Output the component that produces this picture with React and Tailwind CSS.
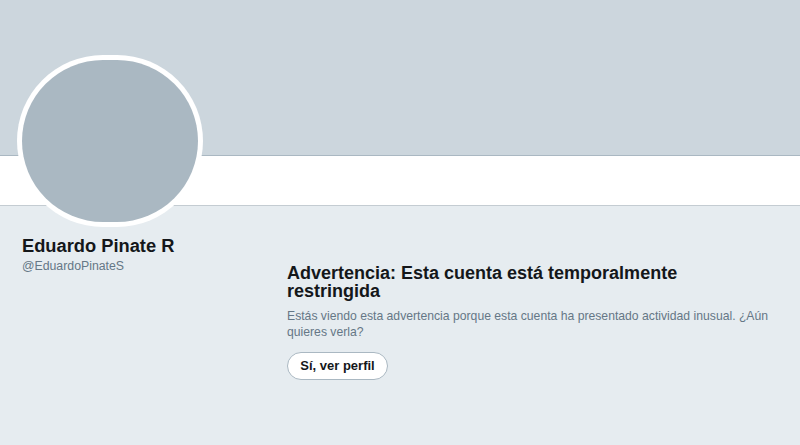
import React from "react";

const App = () => {
  return (
    <div
      className="relative w-[800px] h-[445px] overflow-hidden bg-[#e6ecf0]"
      style={{ fontFamily: '"Liberation Sans", Arial, sans-serif' }}
    >
      {/* header */}
      <div className="h-[156px] bg-[#ccd6dd] border-b border-[#aab8c2]" />
      <div className="h-[50px] bg-white border-b border-[#c4ccd2]" />

      {/* avatar */}
      <div className="absolute left-[17px] top-[55px] w-[186px] h-[172px] rounded-full bg-white p-[5px]">
        <div className="w-full h-full rounded-full bg-[#aab8c2]" />
      </div>

      <div className="flex">
        <div className="w-[287px] pl-[22px] pt-[29px]">
          <h2 className="text-[18.3px] leading-[22px] font-bold text-[#14171a]">Eduardo Pinate R</h2>
          <p className="text-[12.3px] leading-[18px] text-[#657786]">@EduardoPinateS</p>
        </div>
        <div className="w-[486px] pt-[58px]">
          <h1 className="text-[18px] leading-[18px] font-bold text-[#14171a]">
            Advertencia: Esta cuenta está temporalmente restringida
          </h1>
          <p className="mt-[8px] text-[12.2px] leading-[16px] text-[#657786]">
            Estás viendo esta advertencia porque esta cuenta ha presentado actividad inusual. ¿Aún quieres verla?
          </p>
          <button
            type="button"
            className="mt-[12px] h-[28px] w-[101px] rounded-full border border-[#aab8c2] bg-white text-[13px] font-bold text-[#14171a]"
          >
            Sí, ver perfil
          </button>
        </div>
      </div>
    </div>
  );
};

export default App;
